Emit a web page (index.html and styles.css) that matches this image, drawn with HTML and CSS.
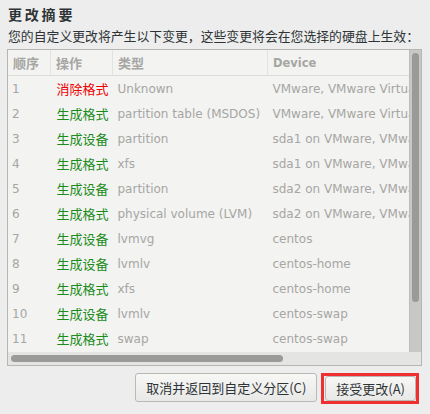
FILE: index.html
```html
<!DOCTYPE html>
<html lang="zh-CN">
<head>
<meta charset="utf-8">
<link rel="stylesheet" href="styles.css">
</head>
<body>
<div class="dialog">
  <h1 class="title">更改摘要</h1>
  <p class="subtitle">您的自定义更改将产生以下变更，这些变更将会在您选择的硬盘上生效：</p>
  <div class="frame">
    <div class="viewport">
      <table class="changes">
        <thead>
          <tr><th class="c-num zh">顺序</th><th class="c-act zh">操作</th><th class="c-type zh">类型</th><th class="c-dev">Device</th></tr>
        </thead>
        <tbody>
          <tr><td>1</td><td class="zh red">消除格式</td><td>Unknown</td><td>VMware, VMware Virtual S</td></tr>
          <tr><td>2</td><td class="zh green">生成格式</td><td>partition table (MSDOS)</td><td>VMware, VMware Virtual S</td></tr>
          <tr><td>3</td><td class="zh green">生成设备</td><td>partition</td><td>sda1 on VMware, VMware Virtual S</td></tr>
          <tr><td>4</td><td class="zh green">生成格式</td><td>xfs</td><td>sda1 on VMware, VMware Virtual S</td></tr>
          <tr><td>5</td><td class="zh green">生成设备</td><td>partition</td><td>sda2 on VMware, VMware Virtual S</td></tr>
          <tr><td>6</td><td class="zh green">生成格式</td><td>physical volume (LVM)</td><td>sda2 on VMware, VMware Virtual S</td></tr>
          <tr><td>7</td><td class="zh green">生成设备</td><td>lvmvg</td><td>centos</td></tr>
          <tr><td>8</td><td class="zh green">生成设备</td><td>lvmlv</td><td>centos-home</td></tr>
          <tr><td>9</td><td class="zh green">生成格式</td><td>xfs</td><td>centos-home</td></tr>
          <tr><td>10</td><td class="zh green">生成设备</td><td>lvmlv</td><td>centos-swap</td></tr>
          <tr><td>11</td><td class="zh green">生成格式</td><td>swap</td><td>centos-swap</td></tr>
        </tbody>
      </table>
    </div>
    <div class="vscroll"><div class="vthumb"></div></div>
    <div class="hscroll"><div class="hthumb"></div></div>
    <div class="corner"></div>
  </div>
  <div class="buttons">
    <button class="btn cancel">取消并返回到自定义分区(C)</button>
    <div class="highlight"><button class="btn accept">接受更改(A)</button></div>
  </div>
</div>
</body>
</html>
```
FILE: styles.css
```css
html, body {
  margin: 0;
  padding: 0;
  background: #ededed;
}
body {
  width: 430px;
  height: 414px;
  overflow: hidden;
  font-family: "DejaVu Sans", "Noto Sans CJK SC", sans-serif;
  font-size: 12px;
  color: #2e3436;
}
.dialog {
  padding: 4px 8px 0 7px;
  display: flex;
  flex-direction: column;
}
.zh {
  font-family: "Noto Sans CJK SC", sans-serif;
  font-size: 13px;
}
.title {
  margin: 0 0 0 1px;
  font-family: "Noto Sans CJK SC", sans-serif;
  font-size: 14px;
  letter-spacing: 2.8px;
  font-weight: bold;
  line-height: 20px;
  color: #2e3436;
}
.subtitle {
  margin: 3px 0 0 1px;
  font-family: "Noto Sans CJK SC", sans-serif;
  font-size: 12.85px;
  line-height: 18px;
  white-space: nowrap;
  color: #2e3436;
}
.frame {
  margin-top: 4px;
  width: 413px;
  height: 315px;
  border: 1px solid #b6b6b3;
  background: #f3f3f2;
  display: grid;
  grid-template-columns: 401px 12px;
  grid-template-rows: 302px 13px;
  overflow: hidden;
}
.viewport {
  overflow: hidden;
}
.changes {
  border-collapse: collapse;
  table-layout: fixed;
  width: 480px;
  white-space: nowrap;
}
.changes th {
  height: 25px;
  padding: 0 0 0 5px;
  text-align: left;
  font-weight: bold;
  color: #a6a6a3;
  border-bottom: 1px solid #dcdcd9;
  border-left: 1px solid #e2e2df;
}
.changes th.c-dev {
  font-size: 11.5px;
}
.changes th:first-child { border-left: none; }
.c-num { width: 37px; }
.c-act { width: 56px; }
.c-type { width: 149px; }
.c-dev { width: 238px; }
.changes td {
  height: 24px;
  padding: 1px 0 0 5px;
  line-height: 18px;
  color: #a6a6a3;
  overflow: hidden;
}
.changes td:first-child { padding-left: 4px; }
.changes td:nth-child(2) { padding-left: 6px; }
.changes td.red { color: #ee0000; }
.changes td.green { color: #1a8c1a; }
.vscroll {
  background: #c8c8c6;
  border-left: 1px solid #bdbdbb;
  padding: 3px 2px 0 2px;
}
.vthumb {
  width: 7px;
  height: 249px;
  border-radius: 4px;
  background: #9a9a98;
}
.hscroll {
  background: #e4e4e2;
  padding: 3px 0 0 3px;
}
.hthumb {
  width: 272px;
  height: 7px;
  border-radius: 4px;
  background: #9a9a98;
}
.corner {
  background: #e4e4e2;
}
.buttons {
  display: flex;
  justify-content: flex-end;
  align-items: flex-start;
  gap: 4px;
  margin-top: 7px;
  padding-right: 3px;
}
.btn {
  font-family: "Noto Sans CJK SC", sans-serif;
  font-size: 13px;
  color: #2e3436;
  height: 29px;
  border: 1px solid #b8b8b5;
  border-radius: 3px;
  background: linear-gradient(#f7f7f6, #e8e8e7);
  padding: 0 10px;
  margin: 0;
  white-space: nowrap;
}
.highlight {
  border: 3px solid #f03030;
  padding: 0 0 0 1px;
  display: flex;
}
.accept {
  height: 25px;
}
```
